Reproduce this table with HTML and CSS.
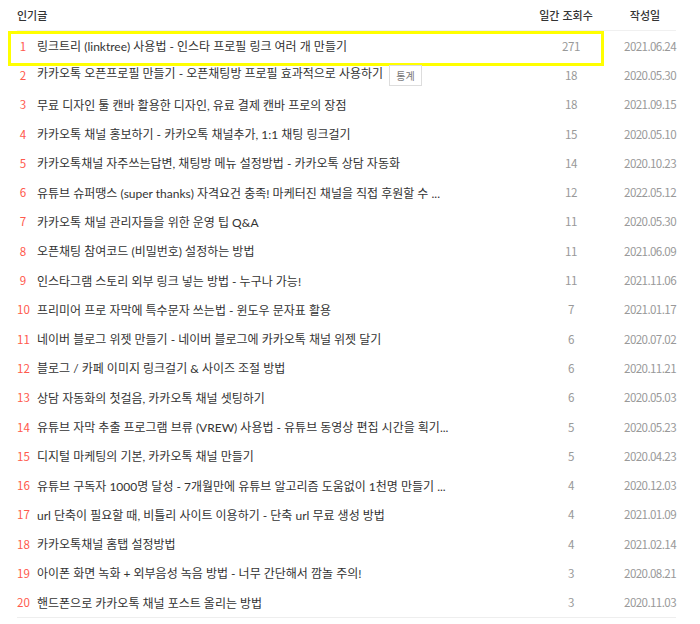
FILE: index.html
```html
<!DOCTYPE html>
<html lang="ko">
<head>
<meta charset="utf-8">
<link rel="stylesheet" href="styles.css">
</head>
<body>
<div class="board">
  <div class="head">
    <span class="h-title">인기글</span>
    <span class="h-views">일간 조회수</span>
    <span class="h-date">작성일</span>
  </div>
  <ol class="list">
    <li class="row hl"><span class="num">1</span><span class="title">링크트리 (linktree) 사용법 - 인스타 프로필 링크 여러 개 만들기</span><span class="views">271</span><span class="date">2021.06.24</span></li>
    <li class="row"><span class="num">2</span><span class="title">카카오톡 오픈프로필 만들기 - 오픈채팅방 프로필 효과적으로 사용하기 <span class="btn">통계</span></span><span class="views">18</span><span class="date">2020.05.30</span></li>
    <li class="row"><span class="num">3</span><span class="title">무료 디자인 툴 캔바 활용한 디자인, 유료 결제 캔바 프로의 장점</span><span class="views">18</span><span class="date">2021.09.15</span></li>
    <li class="row"><span class="num">4</span><span class="title">카카오톡 채널 홍보하기 - 카카오톡 채널추가, 1:1 채팅 링크걸기</span><span class="views">15</span><span class="date">2020.05.10</span></li>
    <li class="row"><span class="num">5</span><span class="title">카카오톡채널 자주쓰는답변, 채팅방 메뉴 설정방법 - 카카오톡 상담 자동화</span><span class="views">14</span><span class="date">2020.10.23</span></li>
    <li class="row"><span class="num">6</span><span class="title">유튜브 슈퍼땡스 (super thanks) 자격요건 충족! 마케터진 채널을 직접 후원할 수 ...</span><span class="views">12</span><span class="date">2022.05.12</span></li>
    <li class="row"><span class="num">7</span><span class="title">카카오톡 채널 관리자들을 위한 운영 팁 Q&amp;A</span><span class="views">11</span><span class="date">2020.05.30</span></li>
    <li class="row"><span class="num">8</span><span class="title">오픈채팅 참여코드 (비밀번호) 설정하는 방법</span><span class="views">11</span><span class="date">2021.06.09</span></li>
    <li class="row"><span class="num">9</span><span class="title">인스타그램 스토리 외부 링크 넣는 방법 - 누구나 가능!</span><span class="views">11</span><span class="date">2021.11.06</span></li>
    <li class="row"><span class="num">10</span><span class="title">프리미어 프로 자막에 특수문자 쓰는법 - 윈도우 문자표 활용</span><span class="views">7</span><span class="date">2021.01.17</span></li>
    <li class="row"><span class="num">11</span><span class="title">네이버 블로그 위젯 만들기 - 네이버 블로그에 카카오톡 채널 위젯 달기</span><span class="views">6</span><span class="date">2020.07.02</span></li>
    <li class="row"><span class="num">12</span><span class="title">블로그 / 카페 이미지 링크걸기 &amp; 사이즈 조절 방법</span><span class="views">6</span><span class="date">2020.11.21</span></li>
    <li class="row"><span class="num">13</span><span class="title">상담 자동화의 첫걸음, 카카오톡 채널 셋팅하기</span><span class="views">6</span><span class="date">2020.05.03</span></li>
    <li class="row"><span class="num">14</span><span class="title">유튜브 자막 추출 프로그램 브류 (VREW) 사용법 - 유튜브 동영상 편집 시간을 획기...</span><span class="views">5</span><span class="date">2020.05.23</span></li>
    <li class="row"><span class="num">15</span><span class="title">디지털 마케팅의 기본, 카카오톡 채널 만들기</span><span class="views">5</span><span class="date">2020.04.23</span></li>
    <li class="row"><span class="num">16</span><span class="title">유튜브 구독자 1000명 달성 - 7개월만에 유튜브 알고리즘 도움없이 1천명 만들기 ...</span><span class="views">4</span><span class="date">2020.12.03</span></li>
    <li class="row"><span class="num">17</span><span class="title">url 단축이 필요할 때, 비틀리 사이트 이용하기 - 단축 url 무료 생성 방법</span><span class="views">4</span><span class="date">2021.01.09</span></li>
    <li class="row"><span class="num">18</span><span class="title">카카오톡채널 홈탭 설정방법</span><span class="views">4</span><span class="date">2021.02.14</span></li>
    <li class="row"><span class="num">19</span><span class="title">아이폰 화면 녹화 + 외부음성 녹음 방법 - 너무 간단해서 깜놀 주의!</span><span class="views">3</span><span class="date">2020.08.21</span></li>
    <li class="row"><span class="num">20</span><span class="title">핸드폰으로 카카오톡 채널 포스트 올리는 방법</span><span class="views">3</span><span class="date">2020.11.03</span></li>
  </ol>
</div>
</body>
</html>
```

FILE: styles.css
```css
* { box-sizing: border-box; }
html, body { margin: 0; padding: 0; background: #fff; }
body {
  font-family: "Noto Sans CJK KR", "Noto Sans", sans-serif;
  font-size: 12px;
  color: #333;
}
.board {
  width: 676px;
  padding-left: 17px;
}
.head {
  display: grid;
  grid-template-columns: 1fr 70px 70px;
  align-items: center;
  height: 31px;
  border-bottom: 1px solid #f0f0f0;
  font-size: 11px;
  font-weight: 500;
  color: #333;
}
.h-views { text-align: center; margin-left: -10px; }
.h-date { text-align: center; padding-left: 8px; }
.list {
  list-style: none;
  margin: 0;
  padding: 0;
  border-bottom: 1px solid #eee;
}
.row {
  position: relative;
  display: grid;
  grid-template-columns: 12px 1fr 70px 70px;
  column-gap: 8px;
  align-items: center;
  height: 29.3px;
  white-space: nowrap;
}
.row .num {
  color: #ff5a4d;
  text-align: center;
  font-size: 11.6px;
}
.row .title {
  font-family: "Lato", "Noto Sans CJK KR", sans-serif;
  color: #333;
  overflow: hidden;
}
.row .views {
  color: #999;
  text-align: center;
  margin-left: 16px;
  font-size: 11.6px;
  letter-spacing: -0.4px;
}
.row .date {
  color: #999;
  text-align: right;
  font-size: 11.6px;
  letter-spacing: -0.6px;
}
.btn {
  display: inline-block;
  margin-left: 3px;
  padding: 0 6px;
  height: 21px;
  line-height: 19px;
  font-family: "Noto Sans CJK KR", sans-serif;
  font-size: 10px;
  color: #777;
  border: 1px solid #ddd;
  vertical-align: middle;
}
.hl::after {
  content: "";
  position: absolute;
  left: -9px;
  top: 0;
  width: 590px;
  height: 29px;
  border: 3px solid #ffff00;
  pointer-events: none;
}
```
